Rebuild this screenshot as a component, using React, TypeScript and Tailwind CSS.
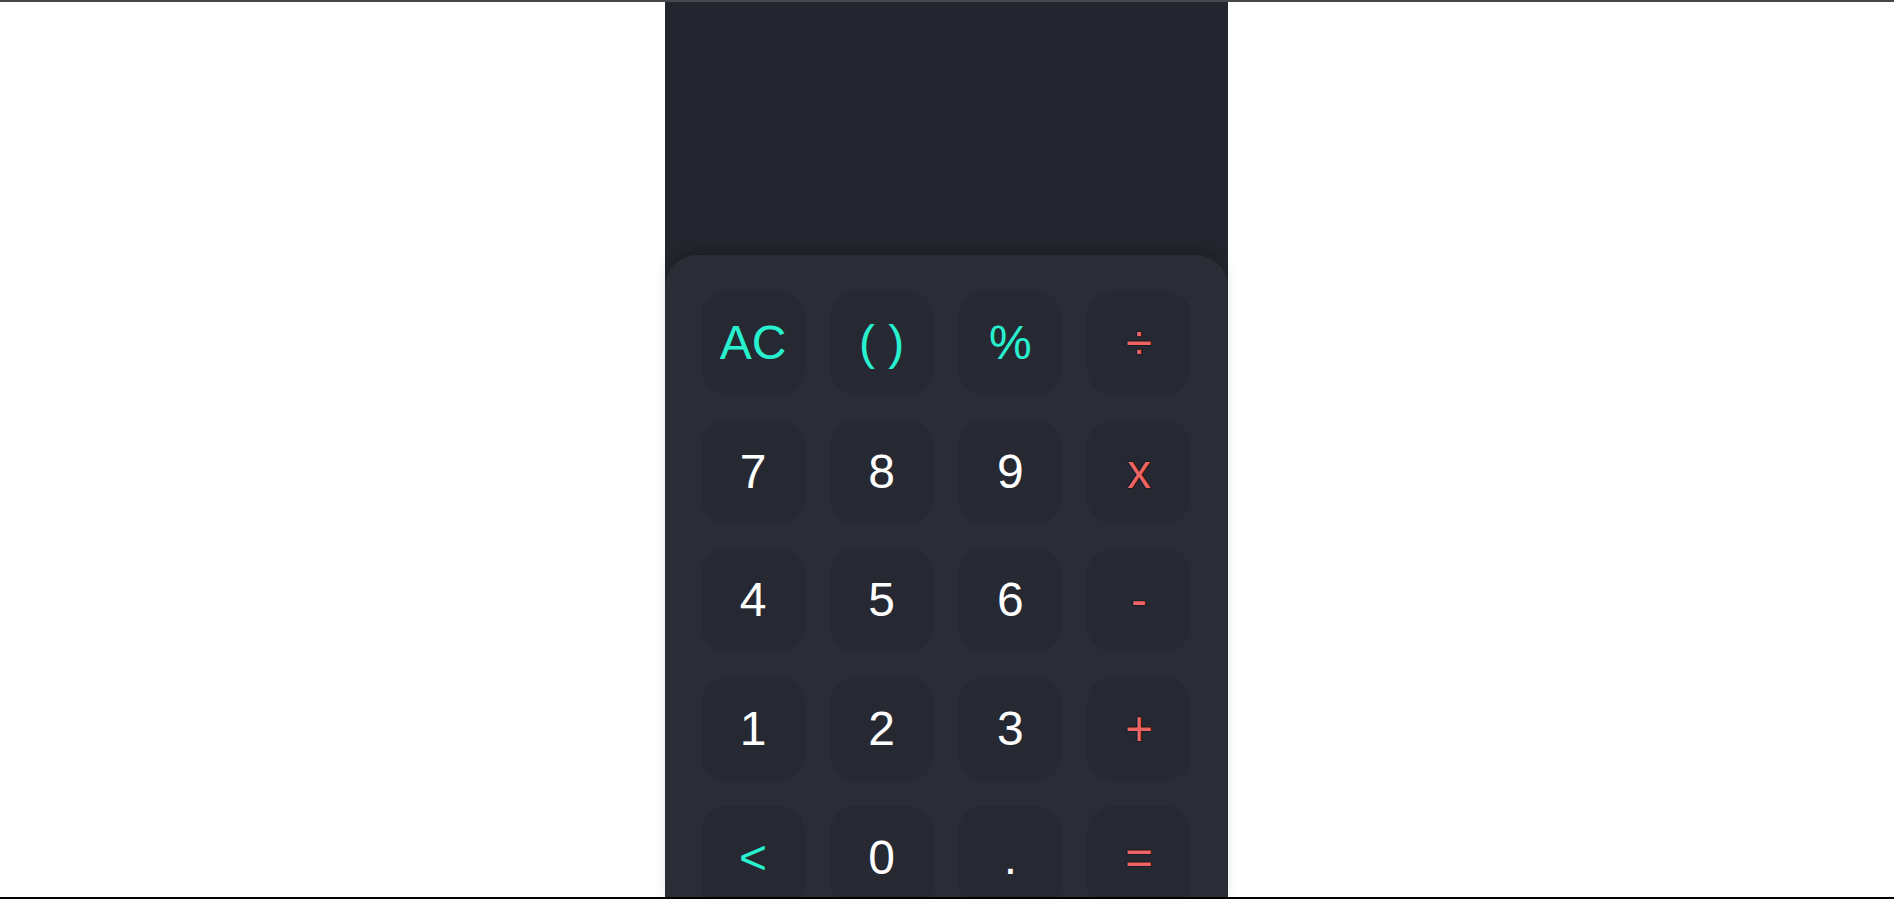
import React from "react";

type Key = { label: string; kind: "num" | "fn" | "op" };

const keys: Key[] = [
  { label: "AC", kind: "fn" },
  { label: "( )", kind: "fn" },
  { label: "%", kind: "fn" },
  { label: "÷", kind: "op" },
  { label: "7", kind: "num" },
  { label: "8", kind: "num" },
  { label: "9", kind: "num" },
  { label: "x", kind: "op" },
  { label: "4", kind: "num" },
  { label: "5", kind: "num" },
  { label: "6", kind: "num" },
  { label: "-", kind: "op" },
  { label: "1", kind: "num" },
  { label: "2", kind: "num" },
  { label: "3", kind: "num" },
  { label: "+", kind: "op" },
  { label: "<", kind: "fn" },
  { label: "0", kind: "num" },
  { label: ".", kind: "num" },
  { label: "=", kind: "op" },
];

function KeyButton({ k }: { k: Key }) {
  const color =
    k.kind === "num"
      ? "text-white"
      : k.kind === "fn"
      ? "text-[#28f1cf]"
      : "text-[#ec6464] [text-shadow:0_0_1px_#000,0_0_1px_#000,0_0_1px_#000]";
  return (
    <button
      className={`w-full aspect-square rounded-[26px] bg-[#262932] flex items-center justify-center text-[48px] leading-none ${color}`}
      style={{ fontFamily: '"Liberation Sans", Arial, sans-serif' }}
    >
      {k.label}
    </button>
  );
}

export default function App() {
  return (
    <div className="h-screen w-full bg-white border-t-2 border-b-2 border-t-[#45484c] border-b-black overflow-hidden flex justify-center pr-[2px]">
      <div className="w-[563px] h-full bg-[#23262e] flex flex-col">
        <div className="h-[253px] shrink-0 bg-[#23262e]" />
        <div className="flex-1 bg-[#2a2d36] rounded-t-[32px] shadow-[0_-10px_16px_-6px_rgba(0,0,0,0.25)] pt-[36px] px-[36.5px]">
          <div className="grid grid-cols-4 gap-[24.5px]">
            {keys.map((k, i) => (
              <KeyButton key={i} k={k} />
            ))}
          </div>
        </div>
      </div>
    </div>
  );
}
